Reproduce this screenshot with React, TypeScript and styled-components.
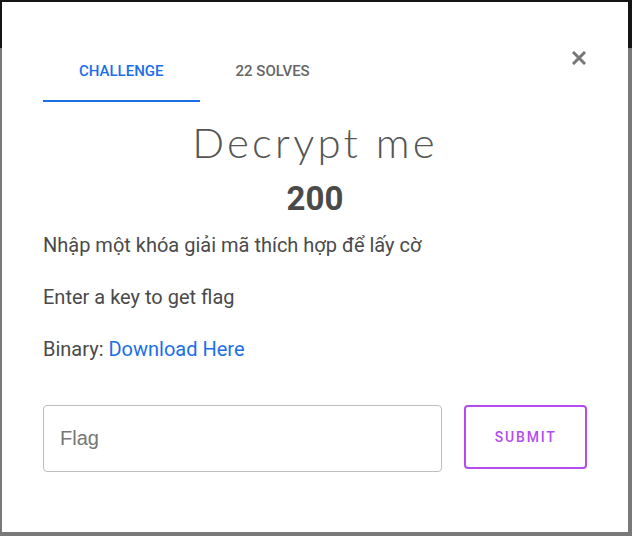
import React from "react";
import styled, { createGlobalStyle } from "styled-components";

const Global = createGlobalStyle`
  html, body { margin: 0; padding: 0; }
  body {
    width: 632px;
    height: 536px;
    overflow: hidden;
    background: linear-gradient(to bottom, #141414 0, #141414 48px, #797979 48px, #797979 100%);
    font-family: Roboto, "Noto Sans", sans-serif;
  }
  #root { padding: 2px 4px 4px 2px; }
`;

const Modal = styled.div`
  box-sizing: border-box;
  width: 626px;
  height: 530px;
  background: #fff;
  padding: 40px 41px 0 41px;
  display: flex;
  flex-direction: column;
`;

const Header = styled.div`
  display: flex;
  justify-content: space-between;
  align-items: flex-start;
`;

const Tabs = styled.div`
  display: flex;
`;

const Tab = styled.div<{ $active?: boolean }>`
  box-sizing: border-box;
  height: 60px;
  padding: 0 36px;
  display: flex;
  align-items: center;
  justify-content: center;
  font-size: 15px;
  font-weight: 500;
  text-transform: uppercase;
  color: ${(p) => (p.$active ? "#1a6fe8" : "#666")};
  border-bottom: 2px solid ${(p) => (p.$active ? "#1a6fe8" : "transparent")};
  cursor: pointer;
`;

const Close = styled.button`
  border: none;
  background: none;
  padding: 0;
  margin-top: 8px;
  width: 16px;
  height: 16px;
  display: flex;
  align-items: center;
  justify-content: center;
  cursor: pointer;
`;

const Title = styled.h1`
  margin: 16px 0 0;
  text-align: center;
  font-family: Lato, "Noto Sans", sans-serif;
  font-weight: 300;
  font-size: 42px;
  line-height: 48px;
  letter-spacing: 3.2px;
  color: #555;
`;

const Points = styled.div`
  margin-top: 14px;
  text-align: center;
  font-size: 33px;
  line-height: 38px;
  font-weight: 700;
  color: #4a4a4a;
`;

const Desc = styled.div`
  margin-top: 12px;
`;

const Para = styled.p`
  margin: 0 0 22px;
  font-size: 20px;
  line-height: 30px;
  color: #4a4a4a;
`;

const Link = styled.a`
  color: #1a6fe8;
  text-decoration: none;
`;

const Form = styled.form`
  margin-top: 19px;
  display: flex;
  gap: 22px;
  align-items: flex-start;
`;

const Input = styled.input`
  box-sizing: border-box;
  width: 401px;
  height: 67px;
  border: 1px solid #bdbdbd;
  border-radius: 4px;
  padding: 0 16px;
  font-family: "Liberation Sans", Arial, sans-serif;
  font-size: 20px;
  color: #333;
  outline: none;
  &::placeholder { color: #767676; }
`;

const Submit = styled.button`
  box-sizing: border-box;
  width: 123px;
  height: 64px;
  border: 2px solid #b44cf0;
  border-radius: 4px;
  background: #fff;
  color: #b44cf0;
  font-family: Roboto, sans-serif;
  font-size: 14px;
  font-weight: 500;
  letter-spacing: 1.8px;
  cursor: pointer;
`;

export default function App() {
  return (
    <>
      <Global />
      <Modal>
        <Header>
          <Tabs>
            <Tab $active>Challenge</Tab>
            <Tab>22 Solves</Tab>
          </Tabs>
          <Close aria-label="Close">
            <svg width="14" height="14" viewBox="0 0 14 14">
              <path d="M2 2 L12 12 M12 2 L2 12" stroke="#777" strokeWidth="3" strokeLinecap="square" />
            </svg>
          </Close>
        </Header>
        <Title>Decrypt me</Title>
        <Points>200</Points>
        <Desc>
          <Para>Nhập một khóa giải mã thích hợp để lấy cờ</Para>
          <Para>Enter a key to get flag</Para>
          <Para>
            Binary: <Link href="#">Download Here</Link>
          </Para>
        </Desc>
        <Form onSubmit={(e) => e.preventDefault()}>
          <Input placeholder="Flag" />
          <Submit type="submit">SUBMIT</Submit>
        </Form>
      </Modal>
    </>
  );
}
